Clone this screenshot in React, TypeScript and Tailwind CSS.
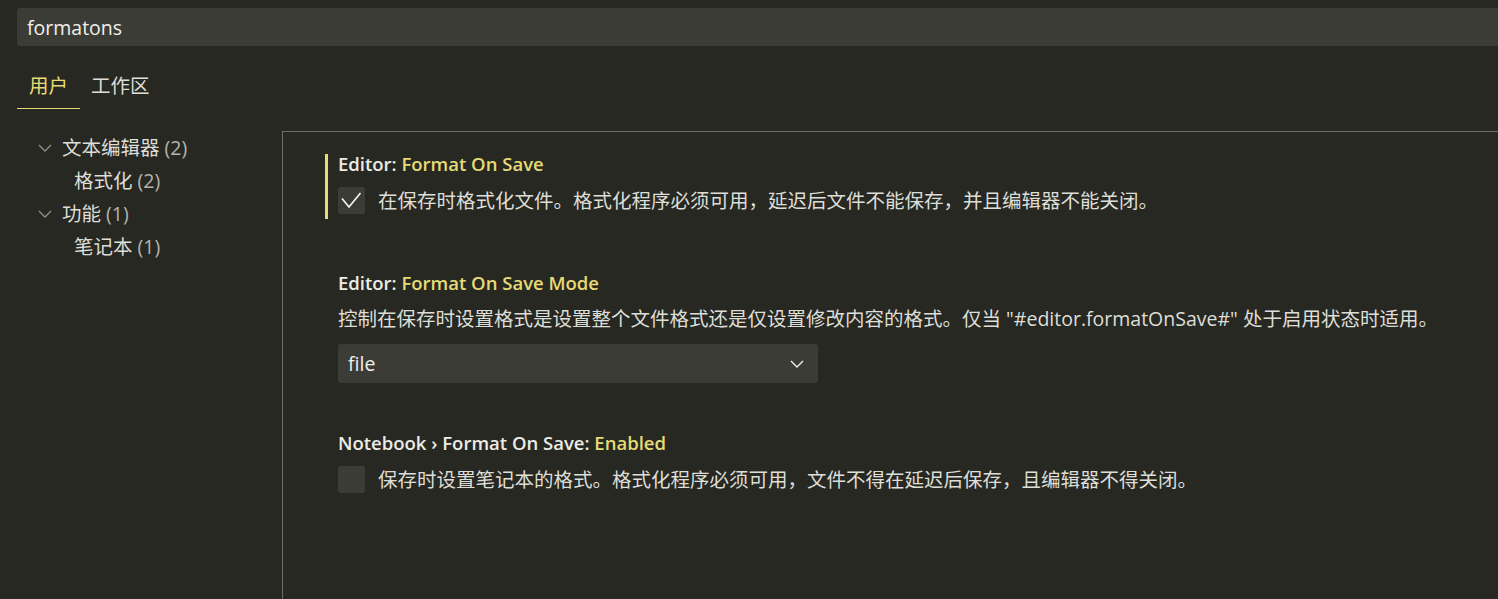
import React from "react";

const FONT = '"Open Sans", "Noto Sans CJK SC", sans-serif';

const TOC = [
  { label: "文本编辑器", count: 2, depth: 0 },
  { label: "格式化", count: 2, depth: 1 },
  { label: "功能", count: 1, depth: 0 },
  { label: "笔记本", count: 1, depth: 1 },
];

function Chevron({ className }: { className?: string }) {
  return (
    <svg width="14" height="8" viewBox="0 0 14 8" fill="none" className={className}>
      <path d="M1 1l6 6 6-6" stroke="currentColor" strokeWidth="1.4" />
    </svg>
  );
}

function Checkbox({ checked }: { checked: boolean }) {
  return (
    <div className="w-[27px] h-[27px] shrink-0 rounded-[3px] bg-[#3c3c37] flex items-center justify-center">
      {checked && (
        <svg width="27" height="27" viewBox="0 0 27 27" fill="none">
          <path d="M4 11.5l7 8.5 11.5-14" stroke="#f8f8f2" strokeWidth="1.6" />
        </svg>
      )}
    </div>
  );
}

export default function App() {
  return (
    <div
      className="w-full h-screen overflow-hidden bg-[#272822] text-[#deded8] text-[19.5px]"
      style={{ fontFamily: FONT }}
    >
      {/* Search */}
      <div className="pt-[8px] pl-[17px]">
        <div className="h-[38px] bg-[#3c3c37] rounded-l-[3px] flex items-center pl-[10px] pt-[2px] text-[#f0f0ea]">
          formatons
        </div>
      </div>

      {/* Tabs */}
      <div className="h-[63px] flex items-end pl-[17px]">
        <div className="h-[46px] px-[12px] flex items-center border-b border-[#e6db74] text-[#e6db74]">
          用户
        </div>
        <div className="h-[46px] px-[11px] flex items-center border-b border-transparent">
          工作区
        </div>
      </div>

      <div className="flex mt-[22px] h-[600px]">
        {/* TOC */}
        <div className="w-[282px] shrink-0">
          {TOC.map((t) => (
            <div key={t.label} className="h-[33px] flex items-center">
              {t.depth === 0 ? (
                <>
                  <Chevron className="ml-[38px] mr-[10px] text-[#8f8f89]" />
                  <span>{t.label}</span>
                </>
              ) : (
                <span className="ml-[74px]">{t.label}</span>
              )}
              <span className="ml-[5px] text-[#b4b4ae]">({t.count})</span>
            </div>
          ))}
        </div>

        {/* Settings */}
        <div className="flex-1 border-l border-t border-[#6e6e68] pl-[42px]">
          <div className="mt-[22px] border-l-[3px] border-[#e6db74] pl-[10px] pb-[4px]">
            <div className="h-[19px] leading-[19px] text-[18.5px] font-semibold text-[#ecece6]">
              Editor: <span className="text-[#e6db74]">Format On Save</span>
            </div>
            <div className="mt-[13px] flex items-center gap-[13px]">
              <Checkbox checked />
              <span>在保存时格式化文件。格式化程序必须可用，延迟后文件不能保存，并且编辑器不能关闭。</span>
            </div>
          </div>

          <div className="mt-[54px] border-l-[3px] border-transparent pl-[10px]">
            <div className="h-[19px] leading-[19px] text-[18.5px] font-semibold text-[#ecece6]">
              Editor: <span className="text-[#e6db74]">Format On Save Mode</span>
            </div>
            <div className="mt-[17px] h-[19px] leading-[19px] whitespace-nowrap">
              控制在保存时设置格式是设置整个文件格式还是仅设置修改内容的格式。仅当 "#editor.formatOnSave#" 处于启用状态时适用。
            </div>
            <div className="mt-[16px] w-[480px] h-[39px] bg-[#3c3c37] rounded-[3px] flex items-center justify-between pl-[10px] pr-[14px] text-[#f0f0ea]">
              <span>file</span>
              <Chevron className="text-[#f0f0ea]" />
            </div>
          </div>

          <div className="mt-[50px] border-l-[3px] border-transparent pl-[10px]">
            <div className="h-[19px] leading-[19px] text-[18.5px] font-semibold text-[#ecece6]">
              Notebook › Format On Save: <span className="text-[#e6db74]">Enabled</span>
            </div>
            <div className="mt-[13px] flex items-center gap-[13px]">
              <Checkbox checked={false} />
              <span>保存时设置笔记本的格式。格式化程序必须可用，文件不得在延迟后保存，且编辑器不得关闭。</span>
            </div>
          </div>
        </div>
      </div>
    </div>
  );
}
